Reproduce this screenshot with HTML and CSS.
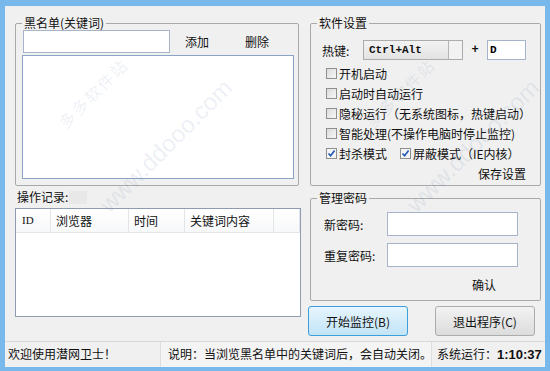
FILE: index.html
```html
<!DOCTYPE html>
<html lang="zh-CN">
<head>
    <meta charset="UTF-8">
    <meta name="viewport" content="width=device-width, initial-scale=1.0">
    <title>潜网卫士</title>
    <link rel="stylesheet" href="styles.css">
</head>
<body>
    <div class="window">
        <div class="main">
            <!-- левая колонка -->
            <div class="col-left">
                <fieldset class="group group-black">
                    <legend>黑名单(关键词)</legend>
                    <div class="add-row">
                        <input type="text" class="word-input">
                        <button class="flat btn-add">添加</button>
                        <button class="flat btn-del">删除</button>
                    </div>
                    <div class="word-list"></div>
                </fieldset>
                <div class="log-label">操作记录:<span class="log-shade"></span></div>
                <div class="log-view">
                    <div class="log-head">
                        <span class="col col-id">ID</span>
                        <span class="col col-browser">浏览器</span>
                        <span class="col col-time">时间</span>
                        <span class="col col-word">关键词内容</span>
                        <span class="col col-rest"></span>
                    </div>
                </div>
            </div>

            <!-- правая колонка -->
            <div class="col-right">
                <fieldset class="group group-settings">
                    <legend>软件设置</legend>
                    <div class="hotkey-row">
                        <span class="hotkey-label">热键:</span>
                        <div class="combo">
                            <span class="combo-text">Ctrl+Alt</span>
                            <span class="combo-btn"></span>
                        </div>
                        <span class="plus">+</span>
                        <input type="text" class="key-input" value="D">
                    </div>
                    <div class="check-row"><span class="box"></span>开机启动</div>
                    <div class="check-row"><span class="box"></span>启动时自动运行</div>
                    <div class="check-row"><span class="box"></span>隐秘运行（无系统图标，热键启动）</div>
                    <div class="check-row"><span class="box"></span>智能处理(不操作电脑时停止监控)</div>
                    <div class="check-row">
                        <span class="check-item">
                            <span class="box checked"><svg viewBox="0 0 9 9" width="9" height="9"><path d="M1.5 4.5 L3.6 6.8 L7.6 1.6" fill="none" stroke="#1f55b5" stroke-width="1.6"/></svg></span>封杀模式
                        </span>
                        <span class="check-item">
                            <span class="box checked"><svg viewBox="0 0 9 9" width="9" height="9"><path d="M1.5 4.5 L3.6 6.8 L7.6 1.6" fill="none" stroke="#1f55b5" stroke-width="1.6"/></svg></span>屏蔽模式（IE内核）
                        </span>
                    </div>
                    <div class="save-row"><button class="flat">保存设置</button></div>
                </fieldset>

                <fieldset class="group group-pass">
                    <legend>管理密码</legend>
                    <div class="pass-row">
                        <span class="pass-label">新密码:</span>
                        <input type="password" class="pass-input">
                    </div>
                    <div class="pass-row">
                        <span class="pass-label">重复密码:</span>
                        <input type="password" class="pass-input">
                    </div>
                    <div class="confirm-row"><button class="flat">确认</button></div>
                </fieldset>

                <div class="action-row">
                    <button class="btn btn-start">开始监控(B)</button>
                    <button class="btn btn-exit">退出程序(C)</button>
                </div>
            </div>
        </div>

        <div class="status">
            <span class="seg seg-hello">欢迎使用潜网卫士！</span>
            <span class="seg seg-info">说明：当浏览黑名单中的关键词后，会自动关闭。</span>
            <span class="seg seg-time">系统运行：<b>1:10:37</b></span>
        </div>

        <!-- водяной знак -->
        <span class="mark mark-cn mark-1">多多软件站</span>
        <span class="mark mark-url mark-2">www.ddooo.com</span>
        <span class="mark mark-cn mark-3">多多软件站</span>
        <span class="mark mark-url mark-4">www.ddooo.com</span>
    </div>
</body>
</html>
```

FILE: styles.css
```css
* {
    box-sizing: border-box;
}
body {
    margin: 0;
    font-family: "Noto Sans CJK SC", "Liberation Sans", sans-serif;
    font-size: 12px;
    color: #111;
    background: #fff;
}
.window {
    position: relative;
    width: 550px;
    height: 371px;
    overflow: hidden;
    background: #f0f0f0;
    border-style: solid;
    border-color: #79b8ea;
    border-width: 6px 5px 4px 5px;
    display: flex;
    flex-direction: column;
}
.main {
    height: 335px;
    display: flex;
    gap: 9px;
    padding: 10px 0 0 10px;
}
.col-left {
    width: 286px;
    display: flex;
    flex-direction: column;
}
.col-right {
    width: 231px;
    display: flex;
    flex-direction: column;
}

/* групповые рамки */
.group {
    margin: 0;
    padding: 0 6px 6px 6px;
    min-width: 0;
    border: 1px solid #a9a9a9;
    border-radius: 2px;
}
.group legend {
    padding: 0 2px;
    line-height: 14px;
    font-size: 12px;
}
.group-black {
    width: 284px;
    height: 170px;
}
button.flat {
    background: none;
    border: none;
    padding: 0;
    font-family: inherit;
    font-size: 12px;
    color: #111;
    height: 20px;
}
input {
    font-family: inherit;
    font-size: 12px;
    border: 1px solid #a5b4cb;
    background: #fff;
    margin: 0;
    padding: 0 2px;
}
.add-row {
    display: flex;
    align-items: center;
    height: 23px;
}
.word-input {
    width: 147px;
    height: 23px;
    margin-left: 1px;
}
.btn-add {
    width: 46px;
    margin-left: 4px;
}
.btn-del {
    width: 46px;
    margin-left: 14px;
}
.word-list {
    margin-top: 2px;
    width: 272px;
    height: 124px;
    background: #fff;
    border: 1px solid #8ba3c4;
}

.log-label {
    margin-top: 3px;
    height: 16px;
    line-height: 16px;
    padding-left: 2px;
    display: flex;
    align-items: center;
}
.log-shade {
    width: 18px;
    height: 13px;
    margin-left: 1px;
    background: #e8e8e8;
}
.log-view {
    margin-top: 3px;
    height: 109px;
    width: 286px;
    background: #fff;
    border: 1px solid #8e9bb0;
}
.log-head {
    display: flex;
    height: 24px;
    background: linear-gradient(#ffffff, #f7f8f9);
    border-bottom: 1px solid #e5e5e5;
}
.col {
    line-height: 23px;
    padding-left: 5px;
    border-right: 1px solid #e3e5e8;
}
.col-id {
    width: 35px;
    padding-left: 6px;
    font-family: "Liberation Serif", serif;
    font-size: 11px;
}
.col-browser { width: 78px; }
.col-time { width: 56px; }
.col-word { width: 89px; }
.col-rest { flex: 1; }

/* настройки */
.group-settings {
    height: 170px;
    padding-bottom: 2px;
}
.hotkey-row {
    margin-top: 10px;
    height: 20px;
    display: flex;
    align-items: center;
}
.hotkey-label {
    width: 46px;
    padding-left: 5px;
}
.combo {
    width: 100px;
    height: 20px;
    display: flex;
    border: 1px solid #acacac;
    background: linear-gradient(#f3f3f3, #e3e3e3);
}
.combo-text {
    flex: 1;
    padding-left: 5px;
    line-height: 18px;
    font-family: "Liberation Mono", monospace;
    font-size: 11px;
    font-weight: bold;
}
.combo-btn {
    width: 14px;
    border-left: 1px solid #b5b5b5;
    background: #f2f2f2;
}
.plus {
    width: 24px;
    text-align: center;
    font-family: "Liberation Mono", monospace;
    font-weight: bold;
}
.key-input {
    width: 39px;
    height: 20px;
    font-family: "Liberation Mono", monospace;
    font-size: 11px;
    font-weight: bold;
}
.check-row {
    height: 20px;
    display: flex;
    align-items: center;
    padding-left: 9px;
}
.hotkey-row + .check-row {
    margin-top: 3px;
}
.check-item {
    display: flex;
    align-items: center;
}
.check-item:first-child {
    width: 74px;
}
.box {
    width: 11px;
    height: 11px;
    margin-right: 2px;
    border: 1px solid #8f8f8f;
    background: linear-gradient(135deg, #dcdcdc, #f6f6f6);
    display: flex;
    align-items: center;
    justify-content: center;
}
.box.checked {
    background: #f4f4f4;
}
.save-row {
    height: 20px;
    display: flex;
    justify-content: flex-end;
    padding-right: 6px;
}
.save-row .flat {
    width: 52px;
}

/* пароль */
.group-pass {
    margin-top: 5px;
    height: 110px;
}
.pass-row {
    margin-top: 7px;
    height: 24px;
    display: flex;
    align-items: center;
}
.pass-label {
    width: 70px;
    padding-left: 7px;
}
.pass-input {
    width: 131px;
    height: 24px;
}
.confirm-row {
    margin-top: 7px;
    height: 20px;
    display: flex;
    justify-content: flex-end;
    padding-right: 27px;
}
.confirm-row .flat {
    width: 46px;
}

.action-row {
    margin-top: 5px;
    display: flex;
}
.btn {
    width: 100px;
    height: 30px;
    font-family: inherit;
    font-size: 12px;
    color: #111;
    border-radius: 3px;
    padding: 0;
}
.btn-start {
    margin-left: -2px;
    border: 1px solid #3c9fdc;
    background: linear-gradient(#e6f5fd, #c2e4f7);
}
.btn-exit {
    margin-left: 27px;
    border: 1px solid #acacac;
    background: linear-gradient(#f2f2f2, #dcdcdc);
}

/* строка состояния */
.status {
    height: 26px;
    display: flex;
    border-top: 1px solid #d9d9d9;
}
.seg {
    line-height: 24px;
    white-space: nowrap;
}
.seg-hello {
    width: 155px;
    padding-left: 3px;
}
.seg-info {
    width: 272px;
    padding-left: 7px;
    background: #f4f4f4;
    border-left: 1px solid #dedede;
    border-right: 1px solid #dedede;
}
.seg-time {
    flex: 1;
    padding-left: 5px;
}
.seg-time b {
    font-family: "Liberation Sans", sans-serif;
    font-size: 13px;
}

/* водяной знак поверх окна */
.mark {
    position: absolute;
    color: rgba(110, 130, 175, 0.13);
    white-space: nowrap;
    pointer-events: none;
    transform: translate(-50%, -50%) rotate(-45deg);
}
.mark-cn {
    font-size: 16px;
    letter-spacing: 2px;
}
.mark-url {
    font-family: "Liberation Sans", sans-serif;
    font-size: 24px;
}
.mark-1 { left: 88px; top: 87px; }
.mark-2 { left: 161px; top: 140px; }
.mark-3 { left: 395px; top: 87px; }
.mark-4 { left: 468px; top: 140px; }
```
